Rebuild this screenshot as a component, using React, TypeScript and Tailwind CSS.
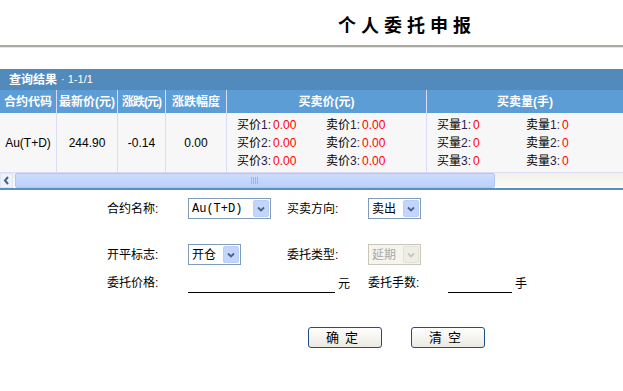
import React from "react";

const font = { fontFamily: '"Liberation Sans", "Noto Sans CJK SC", sans-serif' };

const Quote = ({ label, n, value }: { label: string; n: number; value: string }) => (
  <div className="whitespace-nowrap">
    <span className="text-black">{label}</span>
    <span className="text-[#2a1a4a]">{n}:</span>
    <span className="ml-[2px] text-[#ff0000]">{value}</span>
  </div>
);

const Arrow = ({ disabled }: { disabled?: boolean }) => (
  <div
    className={
      "flex h-[17px] w-[16px] items-center justify-center rounded-[2px] border " +
      (disabled ? "border-[#e3e1d6] bg-[#efeee6]" : "border-[#b9cdf7] bg-[#c3d5fc]")
    }
  >
    <svg width="8" height="6" viewBox="0 0 8 6">
      <path d="M1 1.5 L4 4.5 L7 1.5" fill="none" stroke={disabled ? "#c9c7ba" : "#4d6185"} strokeWidth="1.8" />
    </svg>
  </div>
);

const Select = ({ text, w, mono, disabled }: { text: string; w: string; mono?: boolean; disabled?: boolean }) => (
  <div
    className={
      "flex h-[21px] items-center justify-between border pl-[3px] pr-[1px] " +
      w +
      (disabled ? " border-[#c9c7ba] bg-[#f5f4ee] text-[#a8a8a8]" : " border-[#7f9db9] bg-white text-black")
    }
  >
    <span
      className="text-[12px]"
      style={mono ? { fontFamily: '"Liberation Mono", "Noto Sans CJK SC", monospace' } : undefined}
    >
      {text}
    </span>
    <Arrow disabled={disabled} />
  </div>
);

const Button = ({ text }: { text: string }) => (
  <button className="flex h-[21px] w-[74px] items-center justify-center rounded-[3px] border border-[#1c4f86] bg-gradient-to-b from-white to-[#ebe9e0] text-[13px] tracking-[6px] text-black">
    {text}
  </button>
);

export default function App() {
  return (
    <div className="h-[391px] w-[623px] overflow-hidden bg-white text-[12px] text-black" style={font}>
      {/* title */}
      <div className="flex h-[45px] items-center pl-[338px] pt-[7px]">
        <h1 className="text-[18px] font-bold tracking-[5px] text-black">个人委托申报</h1>
      </div>
      <div className="h-[3px] border-t-2 border-b border-t-[#a9a9a2] border-b-[#e6e5de]" />

      {/* result table */}
      <div className="mt-[21px]">
        <div className="flex h-[21px] items-center bg-[#528abb] pl-[9px] text-white">
          <span className="font-bold">查询结果</span>
          <span className="ml-[4px] text-[11px]">· 1-1/1</span>
        </div>
        <div className="flex h-[23px] bg-[#5c9dd5] font-bold text-white">
          <div className="flex w-[57px] items-center justify-center whitespace-nowrap border-r border-[#dcdcfa]">合约代码</div>
          <div className="flex w-[61px] items-center justify-center whitespace-nowrap border-r border-[#dcdcfa]">最新价(元)</div>
          <div className="flex w-[48px] items-center justify-center overflow-hidden whitespace-nowrap border-r border-[#dcdcfa] tracking-[-1px]">涨跌(元)</div>
          <div className="flex w-[61px] items-center justify-center whitespace-nowrap border-r border-[#dcdcfa]">涨跌幅度</div>
          <div className="flex w-[200px] items-center justify-center border-r border-[#dcdcfa]">买卖价(元)</div>
          <div className="flex flex-1 items-center justify-center">买卖量(手)</div>
        </div>
        <div className="flex h-[60px] border-b border-[#dcdcf6] bg-[#f7f7f7]">
          <div className="flex w-[57px] items-center justify-center border-r border-[#dcdcf6]">Au(T+D)</div>
          <div className="flex w-[61px] items-center justify-center border-r border-[#dcdcf6]">244.90</div>
          <div className="flex w-[48px] items-center justify-center border-r border-[#dcdcf6]">-0.14</div>
          <div className="flex w-[61px] items-center justify-center border-r border-[#dcdcf6]">0.00</div>
          <div className="flex w-[200px] items-center border-r border-[#dcdcf6] pl-[10px] leading-[18px]">
            <div className="w-[89px]">
              <Quote label="买价" n={1} value="0.00" />
              <Quote label="买价" n={2} value="0.00" />
              <Quote label="买价" n={3} value="0.00" />
            </div>
            <div>
              <Quote label="卖价" n={1} value="0.00" />
              <Quote label="卖价" n={2} value="0.00" />
              <Quote label="卖价" n={3} value="0.00" />
            </div>
          </div>
          <div className="flex flex-1 items-center pl-[10px] leading-[18px]">
            <div className="w-[89px]">
              <Quote label="买量" n={1} value="0" />
              <Quote label="买量" n={2} value="0" />
              <Quote label="买量" n={3} value="0" />
            </div>
            <div>
              <Quote label="卖量" n={1} value="0" />
              <Quote label="卖量" n={2} value="0" />
              <Quote label="卖量" n={3} value="0" />
            </div>
          </div>
        </div>
        {/* scrollbar */}
        <div className="flex h-[15px] items-stretch bg-gradient-to-b from-[#f1efe6] to-[#fcfcf9]">
          <div className="flex w-[13px] items-center justify-center border border-[#dfe6f5] bg-[#eef2fc]">
            <svg width="7" height="9" viewBox="0 0 7 9">
              <path d="M5 1 L2 4.5 L5 8" fill="none" stroke="#4d6185" strokeWidth="2" />
            </svg>
          </div>
          <div className="ml-[2px] flex w-[480px] items-center justify-center rounded-[2px] border border-[#b1c6f5] bg-gradient-to-b from-[#cddcfd] to-[#bcd0fa]">
            <svg width="8" height="7" viewBox="0 0 8 7">
              <path d="M0.5 0 V7 M2.5 0 V7 M4.5 0 V7 M6.5 0 V7" stroke="#9db4e6" strokeWidth="1" />
            </svg>
          </div>
        </div>
        <div className="h-[2px] bg-[#5a8fc2]" />
      </div>

      {/* form */}
      <div className="pl-[107px]">
        <div className="mt-[8px] flex items-center">
          <div className="w-[81px]">合约名称:</div>
          <Select text="Au(T+D)" w="w-[83px]" mono />
          <div className="ml-[16px] w-[81px]">买卖方向:</div>
          <Select text="卖出" w="w-[53px]" />
        </div>
        <div className="mt-[25px] flex items-center">
          <div className="w-[81px]">开平标志:</div>
          <Select text="开仓" w="w-[53px]" />
          <div className="ml-[46px] w-[81px]">委托类型:</div>
          <Select text="延期" w="w-[53px]" disabled />
        </div>
        <div className="mt-[9px] flex items-end">
          <div className="w-[81px] pb-[1px]">委托价格:</div>
          <div className="h-[16px] w-[147px] border-b border-black" />
          <div className="ml-[3px] w-[30px]">元</div>
          <div className="w-[80px] pb-[1px]">委托手数:</div>
          <div className="h-[16px] w-[64px] border-b border-black" />
          <div className="ml-[3px]">手</div>
        </div>
        <div className="mt-[34px] flex pl-[201px]">
          <Button text="确定" />
          <div className="w-[29px]" />
          <Button text="清空" />
        </div>
      </div>
    </div>
  );
}
